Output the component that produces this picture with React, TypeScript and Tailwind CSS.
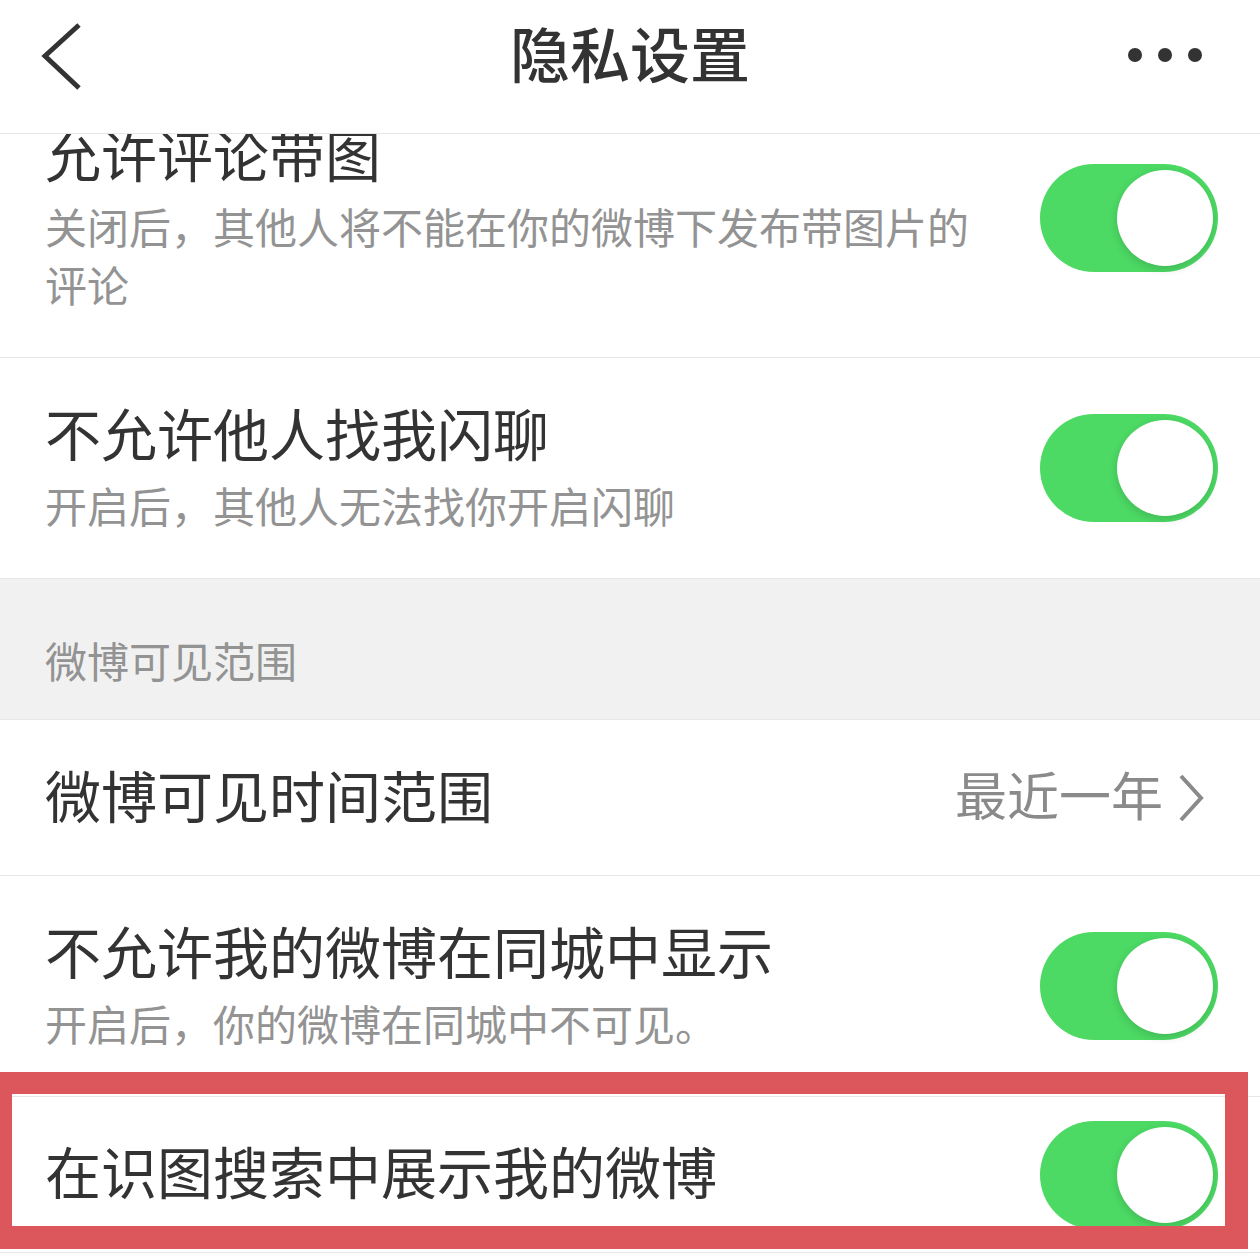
import React from "react";

const font = { fontFamily: '"Noto Sans CJK SC", "Noto Sans", sans-serif' };

function Toggle() {
  return (
    <div className="relative h-[108px] w-[178px] shrink-0 rounded-full bg-[#4cd964]">
      <div className="absolute right-[5px] top-[6px] h-[96px] w-[96px] rounded-full bg-white shadow-[0_3px_8px_rgba(0,0,0,0.15)]" />
    </div>
  );
}

function SwitchRow({ title, desc }: { title: string; desc?: string }) {
  return (
    <div className="flex items-center border-b border-[#e6e6e6] pl-[45px] pr-[42px]">
      <div className="min-w-0 flex-1 pb-[44px] pt-[42px]">
        <div className="text-[56px] leading-[64px] text-[#333333]">{title}</div>
        {desc && (
          <div className="mt-[12px] max-w-[940px] text-[42px] leading-[58px] text-[#939393]">
            {desc}
          </div>
        )}
      </div>
      <Toggle />
    </div>
  );
}

export default function App() {
  return (
    <div className="relative h-[1256px] w-[1260px] overflow-hidden bg-white" style={font}>
      {/* nav bar */}
      <div className="relative z-10 flex h-[134px] items-start justify-between border-b border-[#e6e6e6] bg-white px-[40px] pt-[22px]">
        <svg width="44" height="70" viewBox="0 0 44 70">
          <path d="M39 3 L5 34 L39 66" fill="none" stroke="#333" strokeWidth="5" strokeLinejoin="miter" />
        </svg>
        <div className="absolute left-0 right-0 top-[17px] text-center text-[60px] font-medium leading-[70px] text-[#333]">
          隐私设置
        </div>
        <div className="flex gap-[16px] pr-[18px] pt-[26px]">
          <span className="h-[14px] w-[14px] rounded-full bg-[#333]" />
          <span className="h-[14px] w-[14px] rounded-full bg-[#333]" />
          <span className="h-[14px] w-[14px] rounded-full bg-[#333]" />
        </div>
      </div>

      {/* scrolled list */}
      <div className="-mt-[55px]">
        <SwitchRow title="允许评论带图" desc="关闭后，其他人将不能在你的微博下发布带图片的评论" />
        <SwitchRow title="不允许他人找我闪聊" desc="开启后，其他人无法找你开启闪聊" />

        <div className="flex h-[141px] items-end border-b border-[#e6e6e6] bg-[#f1f1f1] pb-[30px] pl-[45px]">
          <span className="text-[42px] leading-[58px] text-[#939393]">微博可见范围</span>
        </div>

        <div className="flex h-[156px] items-center border-b border-[#e6e6e6] pl-[45px] pr-[56px]">
          <span className="flex-1 pb-[8px] text-[56px] leading-[64px] text-[#333]">微博可见时间范围</span>
          <span className="pb-[8px] text-[52px] leading-[64px] text-[#8a8a8a]">最近一年</span>
          <svg width="26" height="48" viewBox="0 0 26 48" className="ml-[15px]">
            <path d="M3 2 L23 24 L3 46" fill="none" stroke="#8a8a8a" strokeWidth="4" />
          </svg>
        </div>

        <SwitchRow title="不允许我的微博在同城中显示" desc="开启后，你的微博在同城中不可见。" />

        <div className="flex h-[156px] items-center border-b border-[#e6e6e6] pl-[45px] pr-[42px]">
          <span className="flex-1 pb-[10px] text-[56px] leading-[64px] text-[#333]">在识图搜索中展示我的微博</span>
          <Toggle />
        </div>
      </div>

      {/* highlight annotation */}
      <div className="pointer-events-none absolute left-0 top-[1072px] z-20 h-[177px] w-[1248px] border-b-[23px] border-l-[12px] border-r-[23px] border-t-[22px] border-[#db575b]" />
    </div>
  );
}
